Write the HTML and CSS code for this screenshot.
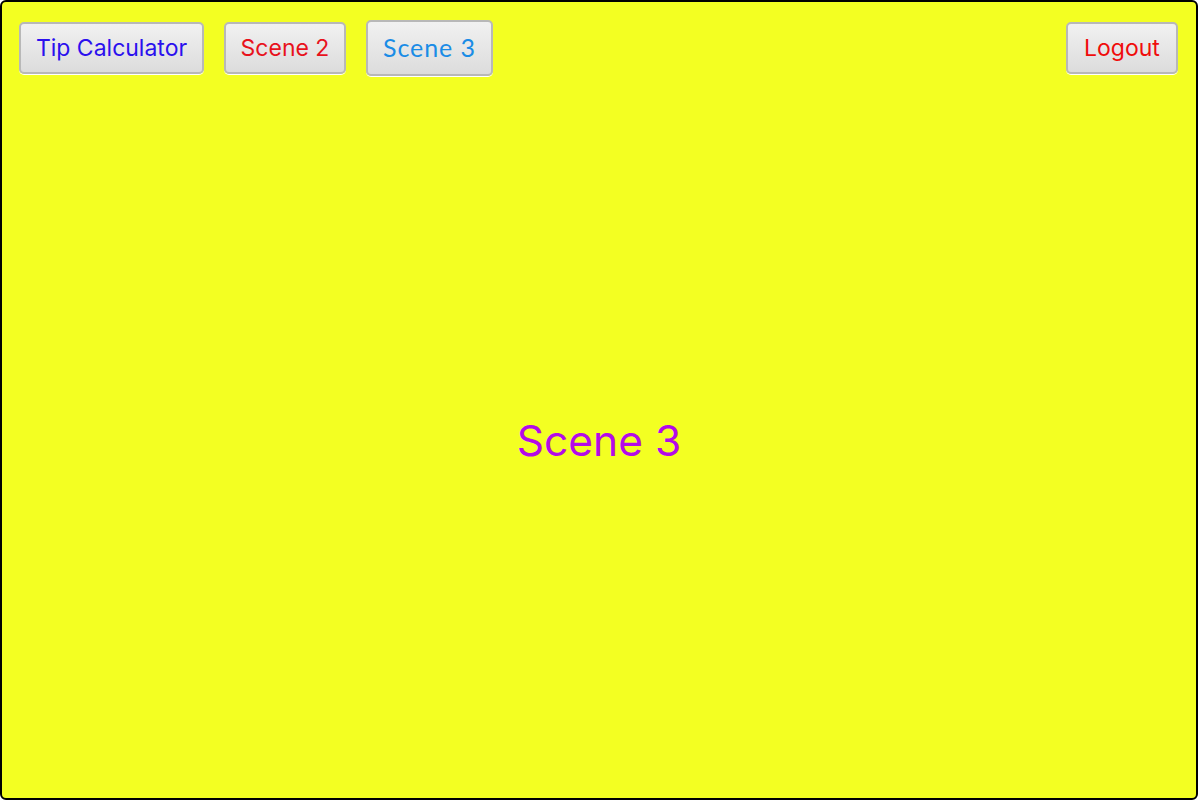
FILE: index.html
```html
<!DOCTYPE html>
<html>
<head>
<meta charset="utf-8">
<link rel="stylesheet" href="styles.css">
</head>
<body>
<div class="frame">
  <div class="toolbar">
    <button class="btn btn-tip">Tip Calculator</button>
    <button class="btn btn-s2">Scene 2</button>
    <button class="btn btn-s3">Scene 3</button>
    <div class="spacer"></div>
    <button class="btn btn-logout">Logout</button>
  </div>
  <div class="content">
    <div class="title">Scene 3</div>
  </div>
</div>
</body>
</html>
```
FILE: styles.css
```css
html, body {
  margin: 0;
  padding: 0;
  width: 1198px;
  height: 800px;
  overflow: hidden;
  background: #ffffff;
}
.frame {
  box-sizing: border-box;
  width: 1198px;
  height: 800px;
  border: 2px solid #000;
  border-radius: 6px;
  background: #f3ff22;
  display: flex;
  flex-direction: column;
}
.toolbar {
  display: flex;
  align-items: center;
  padding: 17px 18px 0 17px;
  height: 58px;
  box-sizing: content-box;
}
.spacer { flex: 1; }
.btn {
  box-sizing: border-box;
  height: 52px;
  border: 2px solid #b8b8b8;
  border-radius: 5px;
  background: linear-gradient(#f1f1f1, #dcdcdc);
  box-shadow: 0 1px 0 #ffffff;
  font-family: "Inter", "Roboto", sans-serif;
  font-size: 23px;
  padding: 0;
  margin: 0;
  cursor: default;
}
.btn-tip { width: 185px; color: #2b10ee; margin-right: 20px; }
.btn-s2 { width: 122px; color: #e8121c; margin-right: 20px; }
.btn-s3 {
  width: 127px;
  height: 56px;
  color: #1a8ce6;
  font-family: "Lato", "Open Sans", sans-serif;
  font-size: 25px;
  letter-spacing: 0.9px;
  padding-bottom: 2px;
}
.btn-logout { width: 112px; color: #f00c0c; }
.content {
  flex: 1;
  display: flex;
  align-items: center;
  justify-content: center;
  padding-top: 6px;
}
.title {
  font-family: "Inter", "Roboto", sans-serif;
  font-size: 42.5px;
  color: #b40ae8;
}
```
